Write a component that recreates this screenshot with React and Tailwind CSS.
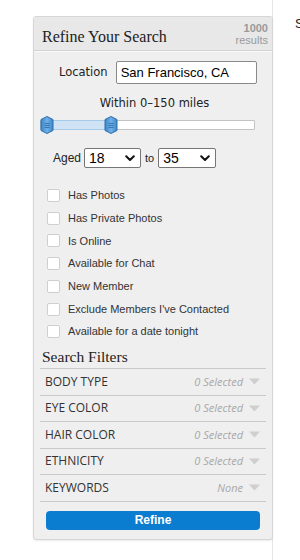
import React from "react";

const Chevron = () => (
  <svg width="10" height="7" viewBox="0 0 10 7" className="shrink-0">
    <path d="M1.2 1.2 L5 5 L8.8 1.2" fill="none" stroke="#111" strokeWidth="2" strokeLinecap="round" strokeLinejoin="round" />
  </svg>
);

const Select = ({ value, w }) => (
  <div className={`flex items-center justify-between h-[20px] bg-white border border-[#767676] rounded-[2px] pl-[4px] pr-[5px] ${w}`}>
    <span className="text-[14px] text-black leading-none" style={{ fontFamily: '"Liberation Sans", Arial, sans-serif' }}>{value}</span>
    <Chevron />
  </div>
);

const Handle = () => (
  <svg width="14" height="18" viewBox="0 0 14 18" className="shrink-0">
    <defs>
      <linearGradient id="hg" x1="0" y1="0" x2="1" y2="0">
        <stop offset="0" stopColor="#3d86c9" />
        <stop offset="0.5" stopColor="#6fb0e6" />
        <stop offset="1" stopColor="#3d86c9" />
      </linearGradient>
    </defs>
    <path d="M7 0.5 L13 3.5 L13 14.5 L7 17.5 L1 14.5 L1 3.5 Z" fill="url(#hg)" stroke="#2f6fae" strokeWidth="1" strokeLinejoin="round" />
    <path d="M4.5 7.5 H9.5 M4.5 9.5 H9.5 M4.5 11.5 H9.5" stroke="#2c6aa6" strokeWidth="0.8" />
  </svg>
);

const Checkbox = ({ label }) => (
  <div className="flex items-center h-[22.7px]">
    <div className="w-[13px] h-[13px] bg-white border border-[#cfcfcf] rounded-[2px]" />
    <span className="ml-[8px] text-[11px] text-[#333]" style={{ fontFamily: '"Liberation Sans", Arial, sans-serif' }}>{label}</span>
  </div>
);

const Filter = ({ label, value }) => (
  <div className="flex items-center h-[26.5px] border-b border-[#c9c9c9] pl-[5px] pr-[6px]" style={{ fontFamily: '"Open Sans", sans-serif' }}>
    <span className="text-[12px] text-[#333] flex-1">{label}</span>
    <span className="text-[11px] italic text-[#a8a8a8]">{value}</span>
    <svg width="11" height="7" viewBox="0 0 11 7" className="ml-[6px]">
      <path d="M0 0.5 H11 L5.5 6.5 Z" fill="#cfcfcf" />
    </svg>
  </div>
);

export default function App() {
  const checks = [
    "Has Photos",
    "Has Private Photos",
    "Is Online",
    "Available for Chat",
    "New Member",
    "Exclude Members I've Contacted",
    "Available for a date tonight",
  ];
  const filters = [
    ["BODY TYPE", "0 Selected"],
    ["EYE COLOR", "0 Selected"],
    ["HAIR COLOR", "0 Selected"],
    ["ETHNICITY", "0 Selected"],
    ["KEYWORDS", "None"],
  ];
  return (
    <div className="flex w-[300px] h-[560px] bg-white overflow-hidden">
      <div className="w-[273px] shrink-0 h-full border-r border-[#e6e6e6] pt-[16px] pl-[33px]">
        <div className="w-[240px] h-[524px] bg-[#efefef] border border-[#d6d6d6] rounded-[3px] shadow-[0_1px_2px_rgba(0,0,0,0.08)] flex flex-col">
          <div className="h-[34px] flex items-center justify-between pl-[8px] pr-[4px] bg-[#e8e8e8] border-b border-[#d2d2d2] shadow-[0_1px_0_#fafafa]">
            <span className="text-[16px] text-[#222] mt-[7px]" style={{ fontFamily: '"Liberation Serif", Georgia, serif' }}>Refine Your Search</span>
            <div className="text-right text-[11px] leading-[12px] text-[#9a9a9a]" style={{ fontFamily: '"Liberation Sans", Arial, sans-serif' }}>
              <div className="font-bold">1000</div>
              <div>results</div>
            </div>
          </div>
          <div className="flex items-center mt-[10px] pl-[25px]">
            <span className="text-[11.5px] text-[#222]" style={{ fontFamily: '"DejaVu Sans", Verdana, sans-serif' }}>Location</span>
            <div className="ml-[8px] w-[141px] h-[23px] bg-white border border-[#8a8a8a] rounded-[2px] flex items-center pl-[4px]">
              <span className="text-[13px] text-black" style={{ fontFamily: '"Liberation Sans", Arial, sans-serif' }}>San Francisco, CA</span>
            </div>
          </div>
          <div className="text-center mt-[11px] text-[11.5px] text-[#222] pl-[3px]" style={{ fontFamily: '"DejaVu Sans", Verdana, sans-serif' }}>
            Within 0–150 miles
          </div>
          <div className="relative mt-[4px] ml-[6px] w-[215px] h-[18px] flex items-center">
            <div className="w-full h-[10px] bg-white border border-[#c3c3c3] rounded-[1px]" />
            <div className="absolute left-[5px] top-[4px] w-[66px] h-[10px] bg-[#cfe3f4] border-y border-[#a6cbea]" />
            <div className="absolute left-0 top-0"><Handle /></div>
            <div className="absolute left-[64px] top-0"><Handle /></div>
          </div>
          <div className="flex items-center mt-[14px] pl-[19px]" style={{ fontFamily: '"Liberation Sans", Arial, sans-serif' }}>
            <span className="text-[12px] text-[#222] mr-[3px]">Aged</span>
            <Select value="18" w="w-[57px]" />
            <span className="text-[11px] text-[#222] mx-[4px]">to</span>
            <Select value="35" w="w-[58px]" />
          </div>
          <div className="mt-[16px] pl-[13px] flex flex-col">
            {checks.map((c) => (
              <Checkbox key={c} label={c} />
            ))}
          </div>
          <div className="mt-[3px] pl-[8px] text-[15.5px] text-[#222] h-[22px] flex items-center" style={{ fontFamily: '"Liberation Serif", Georgia, serif' }}>
            Search Filters
          </div>
          <div className="mx-[6px] border-t border-[#c9c9c9] flex flex-col">
            {filters.map(([l, v]) => (
              <Filter key={l} label={l} value={v} />
            ))}
          </div>
          <div className="mx-[12px] mt-[9px] h-[19px] rounded-[4px] bg-[#0b7dd0] flex items-center justify-center">
            <span className="text-[12px] font-bold text-white" style={{ fontFamily: '"Liberation Sans", Arial, sans-serif' }}>Refine</span>
          </div>
        </div>
      </div>
      <div className="pl-[22px] pt-[14px] whitespace-nowrap text-[13px] text-[#222]" style={{ fontFamily: '"Liberation Sans", Arial, sans-serif' }}>
        Search Results
      </div>
    </div>
  );
}
